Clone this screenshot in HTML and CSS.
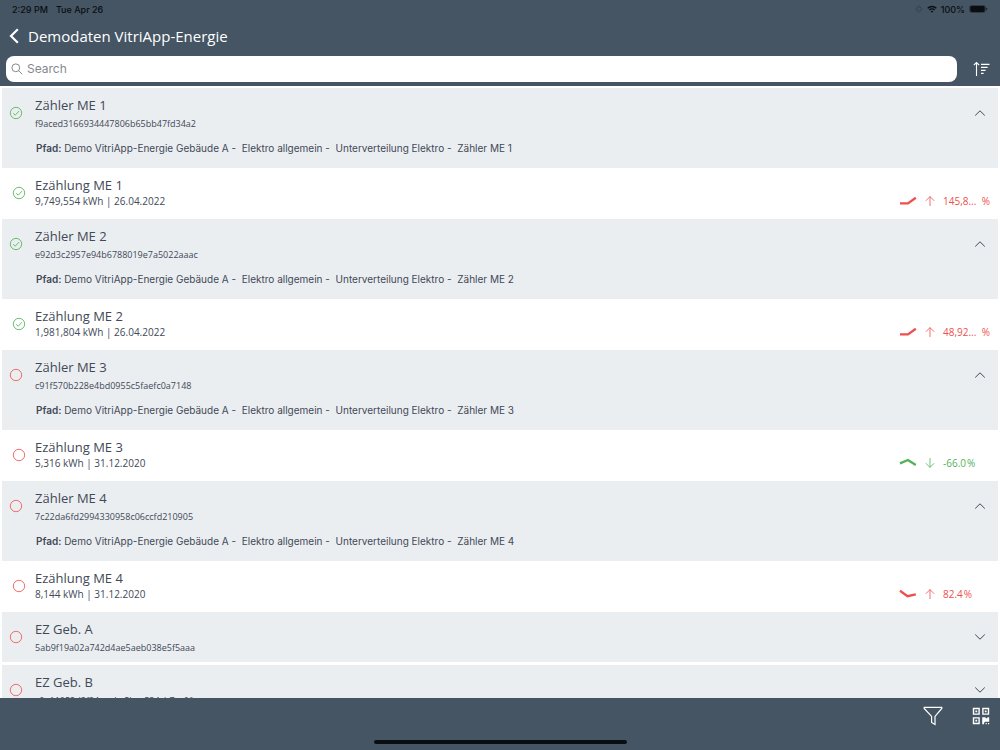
FILE: index.html
```
<!DOCTYPE html>
<html lang="de">
<head>
    <meta charset="UTF-8">
    <meta name="viewport" content="width=device-width, initial-scale=1.0">
    <title>Demodaten VitriApp-Energie</title>
    <link rel="stylesheet" href="styles.css">
</head>
<body>
    <!-- Shared icons -->
    <svg class="sprite" aria-hidden="true">
        <symbol id="done" viewBox="0 0 14 14">
            <circle cx="7" cy="7" r="5.7"/>
            <path d="M4.2 7.3l2 1.9 3.8-4.1"/>
        </symbol>
        <symbol id="open" viewBox="0 0 14 14">
            <circle cx="7" cy="7" r="5.7"/>
        </symbol>
        <symbol id="chevron-up" viewBox="0 0 12 8">
            <path d="M1.2 6.5L6 1.8l4.8 4.7"/>
        </symbol>
        <symbol id="chevron-down" viewBox="0 0 12 8">
            <path d="M1.2 1.5L6 6.2l4.8-4.7"/>
        </symbol>
        <symbol id="arrow-up" viewBox="0 0 10 12">
            <path d="M5 11V1.6M.8 5.8L5 1.6l4.2 4.2"/>
        </symbol>
        <symbol id="arrow-down" viewBox="0 0 10 12">
            <path d="M5 1v9.4M.8 6.2L5 10.4l4.2-4.2"/>
        </symbol>
        <symbol id="trend-rise" viewBox="0 0 18 12">
            <path d="M1 8.4h8L16.8 2.8"/>
        </symbol>
        <symbol id="trend-peak" viewBox="0 0 18 12">
            <path d="M1 6.4L9 3l7.8 5"/>
        </symbol>
        <symbol id="trend-dip" viewBox="0 0 18 12">
            <path d="M1 2.8l7.5 5.4 8.3-1.8"/>
        </symbol>
    </svg>

    <header class="header">
        <div class="status-bar">
            <span>2:29 PM</span>
            <span>Tue Apr 26</span>
            <div class="status-icons">
                <svg class="spinner" viewBox="0 0 8 8">
                    <path d="M4 .6v1.8M4 5.6v1.8M.6 4h1.8M5.6 4h1.8M1.6 1.6l1.2 1.2M5.2 5.2l1.2 1.2M1.6 6.4l1.2-1.2M5.2 2.8l1.2-1.2"/>
                </svg>
                <svg class="wifi" viewBox="0 0 10 8">
                    <path d="M.7 3.2a6.2 6.2 0 0 1 8.6 0M2.4 5a3.7 3.7 0 0 1 5.2 0"/>
                    <path class="dot" d="M5 7.8L3.7 6.4a1.9 1.9 0 0 1 2.6 0z"/>
                </svg>
                <span>100%</span>
                <svg class="battery" viewBox="0 0 19 8">
                    <rect class="shell" x=".5" y=".5" width="16" height="7" rx="2"/>
                    <rect x="1.2" y="1" width="14.6" height="6" rx="1.4"/>
                    <path d="M17.4 2.8q1 .4 1 1.2t-1 1.2z"/>
                </svg>
            </div>
        </div>
        <div class="title-bar">
            <button class="icon-button" aria-label="Zurück">
                <svg class="back" viewBox="0 0 10 16"><path d="M8.8 1.2L2 8l6.8 6.8"/></svg>
            </button>
            <h1 class="title">Demodaten VitriApp-Energie</h1>
        </div>
        <div class="search-bar">
            <label class="search">
                <svg class="search-icon" viewBox="0 0 12 12"><circle cx="4.8" cy="4.8" r="3.9"/><path d="M7.7 7.7l3.5 3.5"/></svg>
                <input type="search" placeholder="Search" aria-label="Search">
            </label>
            <button class="icon-button" aria-label="Sortieren">
                <svg class="sort" viewBox="0 0 17 16">
                    <path d="M3.5 15V1.5M.8 4.2l2.7-2.7 2.7 2.7M8 3.4h8.5M8 6.4h6.6M8 9.4h4.6M8 12.4h2.6"/>
                </svg>
            </button>
        </div>
    </header>

    <main class="list">
        <section class="group">
            <svg class="state done"><use href="#done"/></svg>
            <div class="info">
                <h2 class="name">Zähler ME 1</h2>
                <p class="id">f9aced3166934447806b65bb47fd34a2</p>
                <p class="path"><b>Pfad:</b> Demo VitriApp-Energie Gebäude A -&nbsp; Elektro allgemein -&nbsp; Unterverteilung Elektro -&nbsp; Zähler ME 1</p>
            </div>
            <button class="icon-button toggle" aria-label="Zuklappen"><svg class="chevron"><use href="#chevron-up"/></svg></button>
        </section>
        <section class="reading">
            <svg class="state done"><use href="#done"/></svg>
            <div class="info">
                <h3 class="name">Ezählung ME 1</h3>
                <p class="value">9,749,554 kWh | 26.04.2022</p>
            </div>
            <div class="trend bad">
                <svg class="curve"><use href="#trend-rise"/></svg>
                <svg class="arrow"><use href="#arrow-up"/></svg>
                <span class="percent wide"><span>145,8...</span><span>%</span></span>
            </div>
        </section>

        <section class="group">
            <svg class="state done"><use href="#done"/></svg>
            <div class="info">
                <h2 class="name">Zähler ME 2</h2>
                <p class="id">e92d3c2957e94b6788019e7a5022aaac</p>
                <p class="path"><b>Pfad:</b> Demo VitriApp-Energie Gebäude A -&nbsp; Elektro allgemein -&nbsp; Unterverteilung Elektro -&nbsp; Zähler ME 2</p>
            </div>
            <button class="icon-button toggle" aria-label="Zuklappen"><svg class="chevron"><use href="#chevron-up"/></svg></button>
        </section>
        <section class="reading">
            <svg class="state done"><use href="#done"/></svg>
            <div class="info">
                <h3 class="name">Ezählung ME 2</h3>
                <p class="value">1,981,804 kWh | 26.04.2022</p>
            </div>
            <div class="trend bad">
                <svg class="curve"><use href="#trend-rise"/></svg>
                <svg class="arrow"><use href="#arrow-up"/></svg>
                <span class="percent wide"><span>48,92...</span><span>%</span></span>
            </div>
        </section>

        <section class="group">
            <svg class="state open"><use href="#open"/></svg>
            <div class="info">
                <h2 class="name">Zähler ME 3</h2>
                <p class="id">c91f570b228e4bd0955c5faefc0a7148</p>
                <p class="path"><b>Pfad:</b> Demo VitriApp-Energie Gebäude A -&nbsp; Elektro allgemein -&nbsp; Unterverteilung Elektro -&nbsp; Zähler ME 3</p>
            </div>
            <button class="icon-button toggle" aria-label="Zuklappen"><svg class="chevron"><use href="#chevron-up"/></svg></button>
        </section>
        <section class="reading">
            <svg class="state open"><use href="#open"/></svg>
            <div class="info">
                <h3 class="name">Ezählung ME 3</h3>
                <p class="value">5,316 kWh | 31.12.2020</p>
            </div>
            <div class="trend good">
                <svg class="curve"><use href="#trend-peak"/></svg>
                <svg class="arrow"><use href="#arrow-down"/></svg>
                <span class="percent"><span>-66.0</span><span>%</span></span>
            </div>
        </section>

        <section class="group">
            <svg class="state open"><use href="#open"/></svg>
            <div class="info">
                <h2 class="name">Zähler ME 4</h2>
                <p class="id">7c22da6fd2994330958c06ccfd210905</p>
                <p class="path"><b>Pfad:</b> Demo VitriApp-Energie Gebäude A -&nbsp; Elektro allgemein -&nbsp; Unterverteilung Elektro -&nbsp; Zähler ME 4</p>
            </div>
            <button class="icon-button toggle" aria-label="Zuklappen"><svg class="chevron"><use href="#chevron-up"/></svg></button>
        </section>
        <section class="reading">
            <svg class="state open"><use href="#open"/></svg>
            <div class="info">
                <h3 class="name">Ezählung ME 4</h3>
                <p class="value">8,144 kWh | 31.12.2020</p>
            </div>
            <div class="trend bad">
                <svg class="curve"><use href="#trend-dip"/></svg>
                <svg class="arrow"><use href="#arrow-up"/></svg>
                <span class="percent"><span>82.4</span><span>%</span></span>
            </div>
        </section>

        <section class="group closed">
            <svg class="state open"><use href="#open"/></svg>
            <div class="info">
                <h2 class="name">EZ Geb. A</h2>
                <p class="id">5ab9f19a02a742d4ae5aeb038e5f5aaa</p>
            </div>
            <button class="icon-button toggle" aria-label="Aufklappen"><svg class="chevron"><use href="#chevron-down"/></svg></button>
        </section>
        <section class="group closed">
            <svg class="state open"><use href="#open"/></svg>
            <div class="info">
                <h2 class="name">EZ Geb. B</h2>
                <p class="id">c0e11052d2f94eeabc5bec534cb7ac0f</p>
            </div>
            <button class="icon-button toggle" aria-label="Aufklappen"><svg class="chevron"><use href="#chevron-down"/></svg></button>
        </section>
    </main>

    <footer class="toolbar">
        <div class="actions">
            <button class="icon-button" aria-label="Filter">
                <svg class="filter" viewBox="0 0 20 20">
                    <path d="M1.2 1.3h17.6v1.2L12 10.4v8.1l-3.4-2v-6.1L1.2 2.5z"/>
                </svg>
            </button>
            <button class="icon-button" aria-label="QR-Code scannen">
                <svg class="qr" viewBox="0 0 18 18">
                    <path class="frame" d="M1.5 1.5h5.6v5.6H1.5zM10.9 1.5h5.6v5.6h-5.6zM1.5 10.9h5.6v5.6H1.5z"/>
                    <path d="M3.4 3.4h1.8v1.8H3.4zM12.8 3.4h1.8v1.8h-1.8zM3.4 12.8h1.8v1.8H3.4zM10.2 10.2h3.4v1h1.8v-1h1.8v4.6h-4.4v.8h-.8v1.6h-1.8zM13.6 16h1.2v1.2h-1.2zM16 16h1.2v1.2H16z"/>
                </svg>
            </button>
        </div>
        <div class="home-indicator"></div>
    </footer>
</body>
</html>
```
FILE: styles.css
```
/* General styles */
* {
    box-sizing: border-box;
}
body {
    display: flex;
    flex-direction: column;
    height: 100vh;
    margin: 0;
    background: #fff;
    color: #414957;
    font-family: "Open Sans", "Noto Sans", sans-serif;
    font-size: 12px;
}
h1, h2, h3, p {
    margin: 0;
    font-weight: normal;
}
svg {
    display: block;
    flex: none;
    fill: none;
    stroke: currentColor;
}
.sprite {
    display: none;
}
.icon-button {
    display: flex;
    padding: 0;
    border: 0;
    background: none;
    color: inherit;
}

/* Header */
.header {
    flex: none;
    background: #455564;
    color: #fff;
    padding-bottom: 4px;
}
.status-bar {
    display: flex;
    align-items: center;
    gap: 8px;
    height: 18px;
    padding: 0 12px;
    color: #0b0e11;
    font-family: Inter, sans-serif;
    font-size: 9px;
    font-weight: 500;
}
.status-icons {
    display: flex;
    align-items: center;
    gap: 4px;
    margin-left: auto;
}
.spinner {
    width: 8px;
    height: 8px;
    opacity: 0.5;
    stroke-width: 0.7;
}
.wifi {
    width: 10px;
    height: 8px;
    stroke-width: 1.4;
}
.wifi .dot {
    fill: currentColor;
    stroke: none;
}
.battery {
    width: 19px;
    height: 8px;
    fill: currentColor;
    stroke: none;
}
.battery .shell {
    fill: none;
    stroke: #2b353f;
    stroke-width: 0.8;
}
.title-bar {
    display: flex;
    align-items: center;
    gap: 9px;
    height: 36px;
    padding: 0 9px;
}
.back {
    width: 10px;
    height: 16px;
    stroke-width: 2.2;
}
.title {
    font-size: 15px;
    line-height: 20px;
}
.search-bar {
    display: flex;
    align-items: center;
    gap: 16px;
    padding: 2px 10px 0 6px;
}
.search {
    display: flex;
    flex: 1;
    align-items: center;
    gap: 4px;
    height: 26px;
    padding: 0 5px;
    border-radius: 8px;
    background: #fff;
    color: #85898e;
}
.search-icon {
    width: 12px;
    height: 12px;
}
.search input {
    flex: 1;
    padding: 0 0 2px;
    border: 0;
    outline: 0;
    background: none;
    color: #414957;
    font-family: Inter, sans-serif;
    font-size: 12px;
}
.search input::placeholder {
    color: #85898e;
}
.sort {
    width: 17px;
    height: 16px;
    stroke-width: 1.1;
}

/* Meter list */
.list {
    flex: 1;
    min-height: 0;
    overflow: hidden;
    padding: 2px 2px 0;
}
.group, .reading {
    display: flex;
    align-items: flex-start;
    padding: 8px;
}
.group {
    padding-bottom: 12px;
    padding-left: 7px;
    background: #ebeef1;
}
.closed {
    margin-bottom: 3px;
    padding-bottom: 6px;
}
.reading {
    padding-bottom: 11px;
    padding-left: 10px;
}
.info {
    flex: 1;
    margin-left: 12px;
}
.reading .info {
    margin-left: 9px;
}
.state {
    width: 14px;
    height: 14px;
    margin-top: 10px;
    stroke-width: 0.9;
}
.done {
    color: #5cb860;
}
.open {
    color: #f0605d;
}
.name {
    font-size: 13px;
    line-height: 18px;
}
.id {
    margin-top: 2px;
    font-size: 9px;
    line-height: 16px;
}
.path {
    margin-top: 8px;
    padding-left: 1px;
    font-family: Inter, sans-serif;
    font-size: 10px;
    line-height: 16px;
}
.path b {
    font-weight: 600;
}
.value {
    font-size: 10px;
    line-height: 14px;
}
.toggle {
    padding: 13px 4px;
}
.closed .toggle {
    padding-bottom: 0;
}
.chevron {
    width: 12px;
    height: 8px;
    stroke-width: 1;
}
.trend {
    display: flex;
    align-items: center;
    gap: 8px;
    width: 91px;
    margin-top: 18px;
    font-size: 10px;
    line-height: 14px;
}
.curve {
    width: 18px;
    height: 12px;
    stroke-width: 2.3;
}
.arrow {
    width: 10px;
    height: 12px;
    stroke-width: 0.8;
}
.percent {
    display: flex;
    flex: 1;
    gap: 1px;
}
.wide {
    justify-content: space-between;
}
.bad {
    color: #ef4f4c;
}
.good {
    color: #53b158;
}

/* Bottom toolbar */
.toolbar {
    display: flex;
    flex: none;
    flex-direction: column;
    align-items: center;
    justify-content: space-between;
    height: 52px;
    padding: 8px 10px 6px;
    background: #455564;
    color: #fff;
}
.actions {
    display: flex;
    align-items: center;
    align-self: flex-end;
    gap: 29px;
}
.filter {
    width: 20px;
    height: 20px;
    stroke-width: 1.2;
}
.qr {
    width: 18px;
    height: 18px;
    fill: currentColor;
    stroke: none;
}
.qr .frame {
    fill: none;
    stroke: currentColor;
    stroke-width: 1.4;
}
.home-indicator {
    width: 253px;
    height: 4px;
    border-radius: 2px;
    background: #0b0e11;
}
```
